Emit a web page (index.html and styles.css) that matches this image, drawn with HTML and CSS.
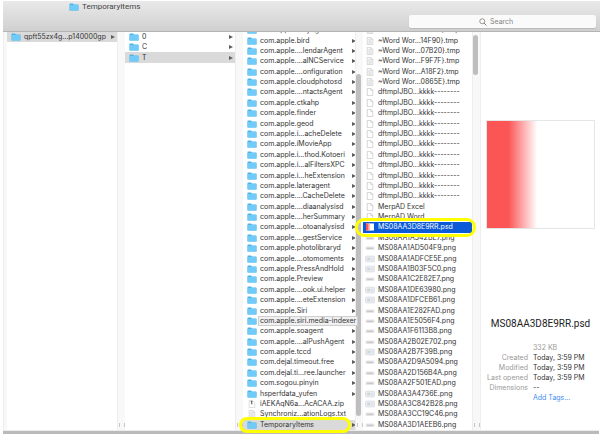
FILE: index.html
```
<!DOCTYPE html>
<html lang="en">
<head>
<meta charset="utf-8">
<title>TemporaryItems</title>
<link rel="stylesheet" href="styles.css">
</head>
<body>
<svg class="defs" aria-hidden="true">
  <symbol id="folder" viewBox="0 0 20 16">
    <path d="M1 2q0-1 1-1h6l2 2h8q1 0 1 1v10q0 1-1 1H2q-1 0-1-1z" fill="#4fb3e6"/>
    <path d="M1 4h18v10q0 1-1 1H2q-1 0-1-1z" fill="#70cbf8"/>
  </symbol>
  <symbol id="page" viewBox="0 0 20 20">
    <path d="M3 1h9l5 5v13H3z" fill="#fff" stroke="#bdbdbd" stroke-width="1.6"/>
    <path d="M12 1v5h5" fill="none" stroke="#bdbdbd" stroke-width="1.6"/>
  </symbol>
  <symbol id="text" viewBox="0 0 20 20">
    <path d="M3 1h9l5 5v13H3z" fill="#fafafa" stroke="#c4c4c4" stroke-width="1.6"/>
    <path d="M12 1v5h5M6 6h4M6 9.500h8M6 12.500h8M6 15.500h8" fill="none" stroke="#c4c4c4" stroke-width="1.300"/>
  </symbol>
  <symbol id="zip" viewBox="0 0 20 20">
    <path d="M3 1h9l5 5v13H3z" fill="#fff" stroke="#c4c4c4" stroke-width="1.400"/>
    <path d="M9.500 2v9M7 4h3" stroke="#444" stroke-width="2.400"/>
  </symbol>
  <symbol id="strip" viewBox="0 0 20 16">
    <rect x="1" y="5" width="18" height="7" rx="2" fill="#e6e6e6"/>
    <path d="M4 8.500h12" stroke="#bdbdbd" stroke-width="2"/>
  </symbol>
  <symbol id="shot" viewBox="0 0 20 16">
    <rect x="1" y="2" width="18" height="12" rx="2" fill="#e9ecef" stroke="#cfd3d6"/>
    <path d="M5 6h4v4H5zM11 7h5M11 10h5" fill="#ccd5dc" stroke="#ccd5dc"/>
  </symbol>
  <symbol id="psd" viewBox="0 0 20 18">
    <path d="M1 1h18v16H1z" fill="#fff"/>
    <path d="M1 1h6v16H1z" fill="#f55"/>
    <path d="M7 1h3v16H7z" fill="#fbb"/>
  </symbol>
  <symbol id="arrow" viewBox="0 0 8 8">
    <path d="M0 0l8 4-8 4z" fill="#5c5c5c"/>
  </symbol>
</svg>
<div class="window">
  <header class="titlebar">
    <h1 class="title"><svg class="icon"><use href="#folder"/></svg>TemporaryItems</h1>
    <label class="search">
      <svg class="lens" viewBox="0 0 16 16"><circle cx="6.500" cy="6.500" r="5" fill="none" stroke="#777" stroke-width="1.500"/><path d="M10 10l5 5" stroke="#777" stroke-width="1.800"/></svg>
      <input type="search" placeholder="Search" aria-label="Search">
    </label>
  </header>
  <main class="columns">
    <div class="gutter"></div>
    <section class="column">
      <ul class="list short">
        <li class="selected">qpft55zx4g...p140000gp</li>
      </ul>
      <div class="gutter"></div>
    </section>
    <section class="column">
      <ul class="list short">
        <li>0</li>
        <li>C</li>
        <li class="selected">T</li>
      </ul>
      <div class="gutter"></div>
    </section>
    <section class="column">
      <ul class="list" id="caches"></ul>
      <div class="gutter"><div class="thumb low"></div></div>
    </section>
    <section class="column">
      <ul class="list files" id="items"></ul>
      <div class="gutter"><div class="thumb high"></div></div>
    </section>
    <aside class="preview">
      <div class="artwork" role="img" aria-label="Red fading to white"></div>
      <h2>MS08AA3D8E9RR.psd</h2>
      <table class="facts">
        <tr><th></th><td class="size">332 KB</td></tr>
        <tr><th>Created</th><td>Today, 3:59 PM</td></tr>
        <tr><th>Modified</th><td>Today, 3:59 PM</td></tr>
        <tr><th>Last opened</th><td>Today, 3:59 PM</td></tr>
        <tr><th>Dimensions</th><td>--</td></tr>
        <tr><th></th><td><a href="#tags">Add Tags...</a></td></tr>
      </table>
    </aside>
  </main>
  <div class="scrollbar"></div>
</div>
<script src="script.js"></script>
</body>
</html>
```
FILE: styles.css
```
* {
  box-sizing: border-box;
}

body {
  margin: 0;
  background: #fff;
  color: #333;
  font: 7px/10px Inter, "Liberation Sans", sans-serif;
}

.defs {
  position: absolute;
  width: 0;
  height: 0;
}

.window {
  display: flex;
  flex-direction: column;
  height: 100vh;
  padding: 1px 0 3px 3px;
}

.titlebar {
  position: relative;
  z-index: 1;
  display: flex;
  flex: none;
  align-items: flex-start;
  justify-content: space-between;
  height: 31px;
  padding-right: 4px;
  background: linear-gradient(#e9e9e9, #d0d0d0);
  border-bottom: 1px solid #b4b4b4;
}

.title {
  display: flex;
  align-items: center;
  gap: 3px;
  margin: 1px 0 0 66px;
  color: #444;
  font-family: Roboto, sans-serif;
  font-size: 8px;
  font-weight: 400;
}

.icon {
  flex: none;
  width: 10px;
  height: 8px;
}

.search {
  display: flex;
  align-items: center;
  gap: 3px;
  width: 187px;
  height: 13px;
  margin-top: 14px;
  padding-left: 70px;
  background: #fafafa;
  border-radius: 2px;
  box-shadow: 0 1px 1px #bbb;
}

.lens {
  flex: none;
  width: 8px;
  height: 8px;
}

.search input {
  flex: 1;
  min-width: 0;
  padding: 0;
  background: none;
  border: 0;
  outline: 0;
  font: inherit;
}

.search input::placeholder {
  color: #858585;
}

.columns {
  display: grid;
  flex: 1;
  grid-template-columns: 4px 118fr 118fr 120fr 117fr 120fr;
  grid-template-rows: minmax(0, 1fr);
  min-height: 0;
}

.column {
  display: grid;
  grid-template-columns: 1fr 8px;
  grid-template-rows: minmax(0, 1fr);
  min-width: 0;
  min-height: 0;
}

.gutter {
  position: relative;
  background: #f8f8f8;
  border-left: 1px solid #eee;
}

.column .gutter::after {
  content: "";
  position: absolute;
  bottom: 3px;
  left: 1px;
  width: 4px;
  height: 4px;
  border: solid #c8c8c8;
  border-width: 0 1px;
}

.thumb {
  width: 5px;
  background: #bebebe;
  border-radius: 3px;
}

.thumb.low {
  height: 86%;
  margin-top: 42px;
}

.thumb.high {
  height: 10%;
  margin-top: 3px;
}

.list {
  display: grid;
  grid-template-rows: repeat(39, minmax(0, 1fr));
  min-width: 0;
  margin: -7px 0 0;
  padding: 0;
  list-style: none;
}

.list.short {
  margin-top: 0;
}

.list li {
  position: relative;
  display: flex;
  align-items: center;
  gap: 3px;
  padding: 0 2px 0 4px;
  white-space: nowrap;
}

.list.files li {
  padding-left: 2px;
}

.list .selected {
  background: #dadada;
}

.list .active {
  background: #0b5bd8;
  color: #fff;
}

.arrow {
  flex: none;
  width: 4px;
  height: 4px;
  margin-left: auto;
}

.tip {
  z-index: 1;
  margin: 0 -2px;
  padding: 0 1px;
  background: #f0f0f0;
  border: 1px solid #cfcfcf;
  line-height: 8px;
}

.ring::after {
  content: "";
  position: absolute;
  z-index: 2;
  inset: -3px 7px -3px -4px;
  border: 3px solid #ff0;
  border-radius: 9px;
}

.active.ring::after {
  inset: -4px -4px -4px -8px;
}

.preview {
  min-width: 0;
  padding: 88px 5px 0 5px;
  border-left: 1px solid #eee;
}

.artwork {
  aspect-ratio: 1;
  background: linear-gradient(90deg, #fc5555 20%, #fff 47%);
  border: 1px solid #e6e6e6;
}

.preview h2 {
  margin: 88px 0 12px;
  color: #222;
  font-family: Roboto, sans-serif;
  font-size: 10px;
  font-weight: 400;
  line-height: 14px;
  text-align: center;
}

.facts {
  border-spacing: 0;
}

.facts th {
  width: 47px;
  padding: 0 5px 0 0;
  color: #999;
  font-weight: 400;
  text-align: right;
  white-space: nowrap;
}

.facts td {
  padding: 0;
  white-space: nowrap;
}

.facts .size {
  color: #999;
}

.facts a {
  color: #3b8df5;
  text-decoration: none;
}

.scrollbar {
  flex: none;
  height: 4px;
  margin-right: 1px;
  background: #bababa;
  border-top: 1px solid #ececec;
}
```
FILE: script.js
```
const caches = `com.apple....ayAgent|com.apple.bird|com.apple....lendarAgent|com.apple....alNCService|com.apple....onfiguration|com.apple.cloudphotosd|com.apple....ntactsAgent|com.apple.ctkahp|com.apple.finder|com.apple.geod|com.apple.i...acheDelete|com.apple.iMovieApp|com.apple.i...thod.Kotoeri|com.apple.i...alFiltersXPC|com.apple.i...heExtension|com.apple.lateragent|com.apple....CacheDelete|com.apple....diaanalysisd|com.apple....herSummary|com.apple....otoanalysisd|com.apple....gestService|com.apple.photolibraryd|com.apple....otomoments|com.apple.PressAndHold|com.apple.Preview|com.apple....ook.ui.helper|com.apple....eteExtension|com.apple.Siri|com.apple.siri.media-indexer|com.apple.soagent|com.apple....alPushAgent|com.apple.tccd|com.dejal.timeout.free|com.dejal.ti...ree.launcher|com.sogou.pinyin|hsperfdata_yufen|iAEKAqN6a...AcACAA.zip|Synchroniz...ationLogs.txt|TemporaryItems`.split("|");

const pngs = "1A342BE7 1AD504F9 1ADFCE5E 1B03F5C0 1C2E82E7 1DE63980 1DFCEB61 1E282FAD 1E5056F4 1F6113B8 2B02E702 2B7F39B 2D9A5094 2D156B4A 2F501EAD 3A4736E 3C842B28 3CC19C46 3D1AEEB6".split(" ");
const framed = new Set(["1ADFCE5E", "1B03F5C0", "1DE63980", "1DFCEB61", "2B7F39B", "3A4736E", "3C842B28"]);

function svg(id, cls) {
  return `<svg class="${cls}"><use href="#${id}"/></svg>`;
}

function row(name, icon, cls = "") {
  const tip = name.includes("media-indexer");
  const arrow = icon === "folder" && !tip ? svg("arrow", "arrow") : "";
  return `<li class="${cls}">${svg(icon, "icon")}<span class="${tip ? "tip" : ""}">${name}</span>${arrow}</li>`;
}

document.getElementById("caches").innerHTML = caches.map((name) => {
  const icon = name.endsWith(".zip") ? "zip" : name.endsWith(".txt") ? "text" : "folder";
  return row(name, icon, name === "TemporaryItems" ? "selected ring" : "");
}).join("");

document.getElementById("items").innerHTML = [
  ...["0A1C2", "14F90", "07B20", "F9F7F", "A18F2", "0865E"].map((id) => row(`~Word Wor...${id}}.tmp`, "text")),
  ...Array.from({ length: 11 }, () => row("dftmpIJBO...kkkk--------", "page")),
  row("MerpAD Excel", "page"),
  row("MerpAD Word", "page"),
  row("MS08AA3D8E9RR.psd", "psd", "active ring"),
  ...pngs.map((id) => row(`MS08AA${id}.png`, framed.has(id) ? "shot" : "strip")),
].join("");

document.querySelectorAll(".short li").forEach((item) => {
  item.innerHTML = `${svg("folder", "icon")}<span>${item.textContent}</span>${svg("arrow", "arrow")}`;
});
```
